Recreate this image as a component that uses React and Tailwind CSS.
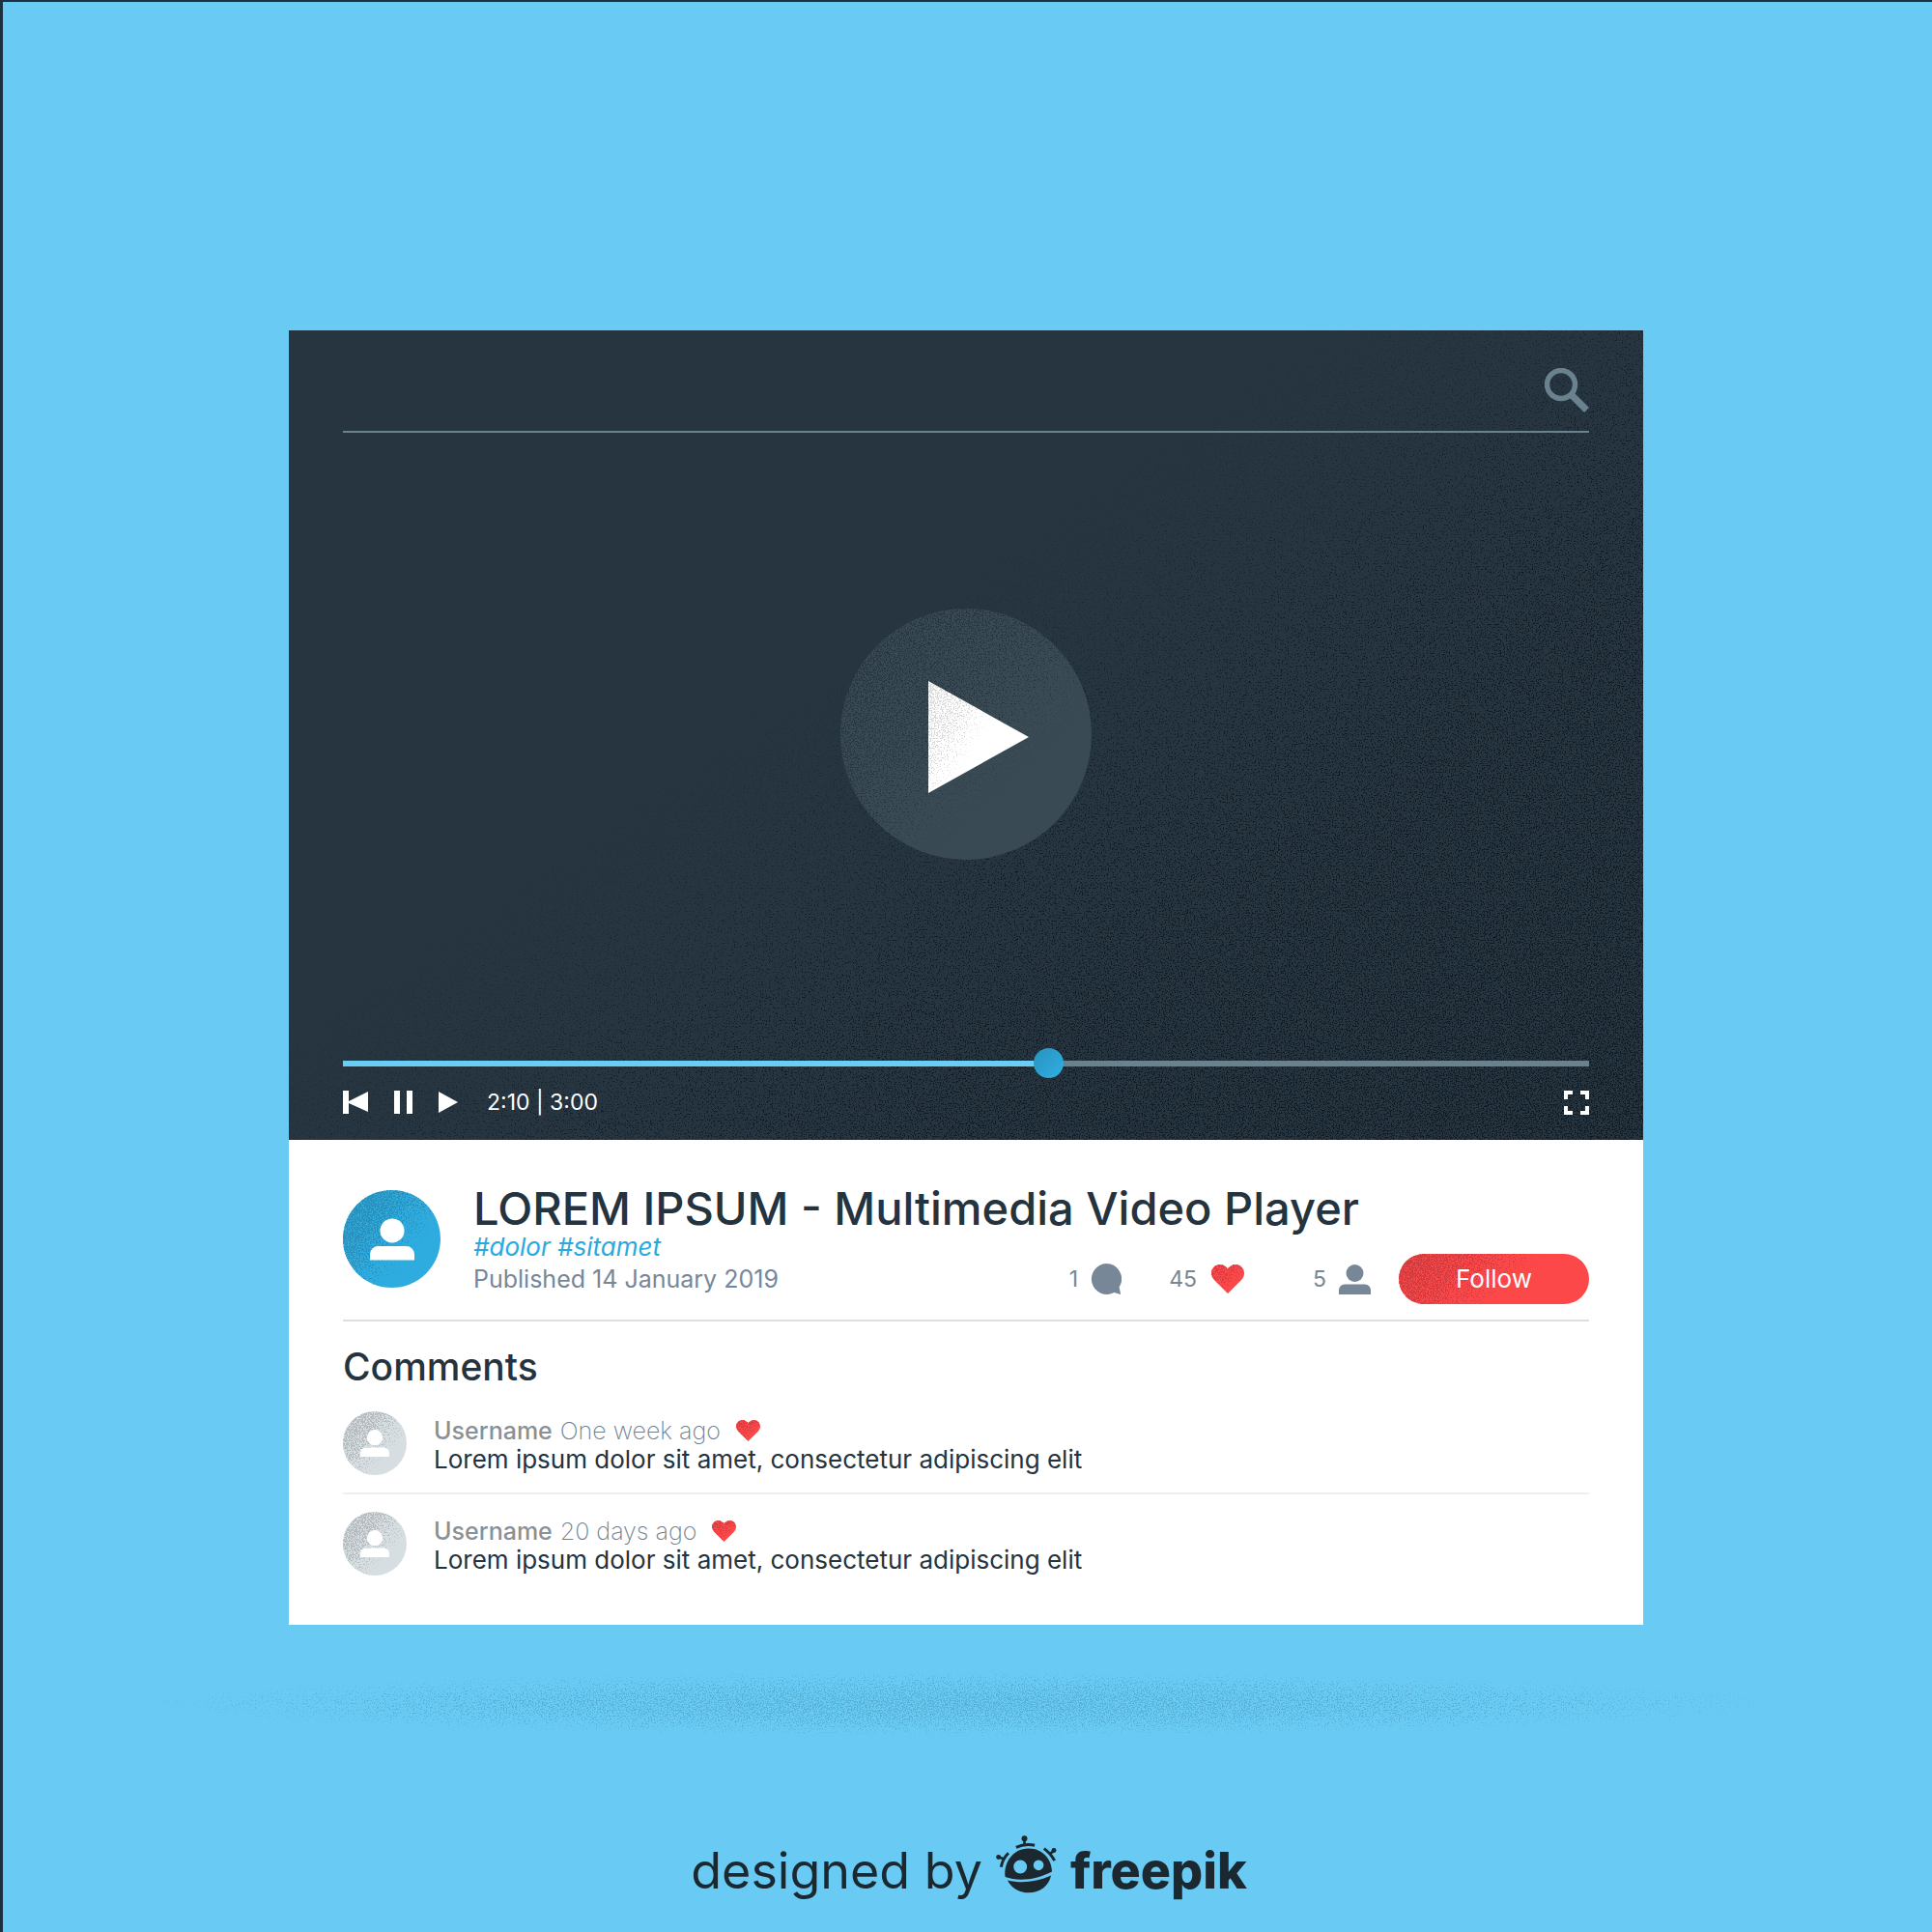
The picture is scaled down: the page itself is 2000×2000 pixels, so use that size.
import React, { useId, useState } from "react";

/* Linear or radial fade plus the speckle filter that turns it into a stipple of one colour. */
function GrainDefs({ id, color, from = [0, 0], to = [0.7, 0.7], strength = 0.8, frequency = 0.7, radial = false }) {
  const stops = (
    <>
      <stop offset="0" stopOpacity={strength} />
      <stop offset="0.5" stopOpacity={strength * 0.72} />
      <stop offset="1" stopOpacity="0" />
    </>
  );
  return (
    <defs>
      {radial ? (
        <radialGradient id={`${id}-fade`}>{stops}</radialGradient>
      ) : (
        <linearGradient id={`${id}-fade`} x1={from[0]} y1={from[1]} x2={to[0]} y2={to[1]}>
          {stops}
        </linearGradient>
      )}
      <filter id={`${id}-speckle`} x="0" y="0" width="1" height="1" colorInterpolationFilters="sRGB">
        <feTurbulence type="fractalNoise" baseFrequency={frequency} numOctaves="2" seed="7" />
        <feColorMatrix values="0 0 0 0 0  0 0 0 0 0  0 0 0 0 0  0 0 0 2.6 -0.8" result="noise" />
        <feComposite in="SourceGraphic" in2="noise" operator="arithmetic" k1="0" k2="1" k3="1" k4="-1" />
        <feComponentTransfer result="dots">
          <feFuncA type="linear" slope="4" />
        </feComponentTransfer>
        <feFlood floodColor={color} />
        <feComposite in2="dots" operator="in" />
      </filter>
    </defs>
  );
}

function Grain(props) {
  const id = useId();
  return (
    <svg className="pointer-events-none absolute inset-0 size-full" aria-hidden="true">
      <GrainDefs id={id} {...props} />
      <rect width="100%" height="100%" fill={`url(#${id}-fade)`} filter={`url(#${id}-speckle)`} />
    </svg>
  );
}

function PersonIcon({ className }) {
  return (
    <svg viewBox="0 0 33 31" fill="currentColor" className={className} aria-hidden="true">
      <circle cx="16.5" cy="9" r="9" />
      <path d="M0 31v-4.500a6 6 0 0 1 6-6h21a6 6 0 0 1 6 6V31z" />
    </svg>
  );
}

function HeartIcon({ className }) {
  const id = useId();
  const d = "M17 30L3.2 16.2C1 13.8 0 11.600 0 9 0 4 3.800 0 8.800 0 12.400 0 15.500 1.800 17 4.600 18.500 1.800 21.600 0 25.200 0 30.200 0 34 4 34 9c0 2.600-1 4.800-3.200 7.200z";
  return (
    <svg viewBox="0 0 34 30" className={className} aria-hidden="true">
      <GrainDefs id={id} color="#d13c40" strength={0.7} to={[0.8, 0.8]} />
      <path d={d} fill="#fc4848" />
      <path d={d} fill={`url(#${id}-fade)`} filter={`url(#${id}-speckle)`} />
    </svg>
  );
}

function BubbleIcon({ className }) {
  return (
    <svg viewBox="0 0 32 32" fill="currentColor" className={className} aria-hidden="true">
      <path d="M16 0a16 16 0 0 1 13.600 24.500L31.200 32l-6.800-1.900A16 16 0 1 1 16 0z" />
    </svg>
  );
}

function Robot({ className }) {
  return (
    <svg viewBox="98 25 190 181" className={className} fill="currentColor" stroke="none" aria-hidden="true">
      <path
        fillRule="evenodd"
        d="M127 155C121 112 150 66 200 66c44 0 72 34 73 72-28 14-62 25-97 25-18 0-35-3-49-8zM174 102a21 21 0 1 0 0 42 21 21 0 0 0 0-42zM231 102a16 16 0 1 0 0 32 16 16 0 0 0 0-32z"
      />
      <path d="M134 165c44 11 92 5 136-15-6 32-35 54-69 54-30 0-54-14-67-39z" />
      <circle cx="187" cy="35" r="9" />
      <circle cx="106" cy="93" r="7.500" />
      <circle cx="279" cy="72" r="7.500" />
      <g fill="none" stroke="currentColor" strokeWidth="8">
        <path d="M187 38v18" />
        <path d="M161 62c18-8 38-10 58-6" strokeWidth="9" />
        <path d="M107 93l17 6" />
        <path d="M114 124c3-18 11-32 23-44" strokeWidth="9" />
        <path d="M279 73l-14 11" />
        <path d="M248 66c14 10 25 22 33 38" strokeWidth="9" />
      </g>
    </svg>
  );
}

function PlayBadge() {
  const disc = useId();
  const tri = useId();
  return (
    <svg viewBox="0 0 260 260" className="size-[260px]" aria-hidden="true">
      <GrainDefs id={disc} color="#273640" strength={0.6} from={[0.1, 0.1]} to={[0.68, 0.72]} />
      <GrainDefs id={tri} color="#d8d8d8" strength={0.62} from={[0, 0.1]} to={[0.55, 0.5]} />
      <circle cx="130" cy="130" r="130" fill="#394a55" />
      <circle cx="130" cy="130" r="130" fill={`url(#${disc}-fade)`} filter={`url(#${disc}-speckle)`} />
      <path d="M91 75L195 133L91 191z" fill="#fff" />
      <path d="M91 75L195 133L91 191z" fill={`url(#${tri}-fade)`} filter={`url(#${tri}-speckle)`} />
    </svg>
  );
}

function SearchBar() {
  return (
    <form role="search" className="flex h-[106px] items-center border-b-2 border-[#6a818e] pt-5" onSubmit={(e) => e.preventDefault()}>
      <input type="text" aria-label="Search" className="h-12 min-w-0 flex-1 bg-transparent text-[26px] text-white outline-none" />
      <button type="submit" aria-label="Submit search" className="text-[#6a818e]">
        <svg viewBox="0 0 46 46" className="size-[46px]" fill="none" stroke="currentColor" aria-hidden="true">
          <circle cx="17" cy="17" r="14.500" strokeWidth="5.500" />
          <path d="M28.500 28.500L43.500 43.500" strokeWidth="7" />
        </svg>
      </button>
    </form>
  );
}

function Controls() {
  const [position, setPosition] = useState(568);
  return (
    <div className="pb-[19px]">
      <input
        type="range"
        aria-label="Seek"
        min="0"
        max="1000"
        value={position}
        onChange={(e) => setPosition(Number(e.target.value))}
        style={{ "--played": `${position / 10}%` }}
        className="block h-[31px] w-full cursor-pointer appearance-none bg-[linear-gradient(to_right,#69cdf4_var(--played),#6a818e_var(--played))] bg-[length:100%_6px] bg-center bg-no-repeat outline-none [&::-webkit-slider-thumb]:size-[31px] [&::-webkit-slider-thumb]:appearance-none [&::-webkit-slider-thumb]:rounded-full [&::-webkit-slider-thumb]:bg-linear-to-br [&::-webkit-slider-thumb]:from-[#2892be] [&::-webkit-slider-thumb]:to-[#2fb0e4]"
      />
      <div className="mt-[5px] flex h-10 items-center text-white">
        <button type="button" aria-label="Previous">
          <svg viewBox="0 0 26 24" className="h-6 w-[26px]" fill="currentColor" aria-hidden="true">
            <path d="M0 0h6v11L26 1v21L6 13v11H0z" />
          </svg>
        </button>
        <button type="button" aria-label="Pause" className="ml-[27px]">
          <svg viewBox="0 0 19 24" className="h-6 w-[19px]" fill="currentColor" aria-hidden="true">
            <path d="M0 0h6v24H0zM13 0h6v24h-6z" />
          </svg>
        </button>
        <button type="button" aria-label="Play" className="ml-[27px]">
          <svg viewBox="0 0 20 24" className="h-6 w-5" fill="currentColor" aria-hidden="true">
            <path d="M0 1l20 11L0 23z" />
          </svg>
        </button>
        <span className="ml-[30px] text-[23px] leading-8">2:10 | 3:00</span>
        <button type="button" aria-label="Full screen" className="ml-auto">
          <svg viewBox="0 0 26 25" className="h-[25px] w-[26px]" fill="none" stroke="currentColor" strokeWidth="4" aria-hidden="true">
            <path d="M2 9V2h7M17 2h7v7M24 16v7h-7M9 23H2v-7" />
          </svg>
        </button>
      </div>
    </div>
  );
}

function Comment({ when, divided }) {
  return (
    <li className={divided ? "flex items-center gap-[28px] border-b-2 border-[#eceeef] pb-[18px]" : "flex items-center gap-[28px] pt-[18px]"}>
      <div className="relative flex size-[66px] shrink-0 items-center justify-center overflow-hidden rounded-full bg-[#d7dee2]">
        <Grain color="#b4babe" strength={0.9} to={[0.75, 0.65]} />
        <PersonIcon className="relative h-[28px] w-[30px] text-white" />
      </div>
      <div className="pt-[3px] leading-[30px]">
        <div className="flex items-center text-[25px]">
          <span className="font-medium text-[#899197]">Username</span>
          <time className="ml-2 font-extralight text-[#6f7f90]">{when}</time>
          <HeartIcon className="ml-4 h-[22px] w-[25px]" />
        </div>
        <p className="text-[26px] text-[#25333e]">Lorem ipsum dolor sit amet, consectetur adipiscing elit</p>
      </div>
    </li>
  );
}

export default function App() {
  return (
    <div className="flex min-h-screen flex-col items-center bg-[#69cbf3] pt-[342px] font-['Inter',sans-serif] shadow-[inset_3px_2px_0_#1b3140]">
      <main className="w-full max-w-[1402px] bg-white">
        <section aria-label="Video" className="relative flex aspect-[1402/838] w-full flex-col bg-[#263540] px-14">
          <Grain color="#111b23" from={[1.05, 0.95]} to={[0.4, 0.38]} strength={0.53} />
          <div className="relative flex flex-1 flex-col">
            <SearchBar />
            <div className="flex flex-1 items-center justify-center pb-[13px]">
              <button type="button" aria-label="Play video" className="rounded-full">
                <PlayBadge />
              </button>
            </div>
            <Controls />
          </div>
        </section>

        <section className="px-14 pb-[51px]">
          <header className="flex items-start gap-[34px] border-b-2 border-[#dae0e4] pt-[47px] pb-[26px]">
            <div className="relative mt-[5px] flex size-[101px] shrink-0 items-center justify-center overflow-hidden rounded-full bg-[#2facdf]">
              <Grain color="#2990bb" strength={0.95} to={[0.75, 0.65]} />
              <PersonIcon className="relative h-[44px] w-[46px] text-white" />
            </div>
            <div className="min-w-0 flex-1">
              <h1 className="text-[47px] leading-[47px] font-medium text-[#25333e]">LOREM IPSUM - Multimedia Video Player</h1>
              <p className="text-[26px] leading-[34px] text-[#2ba9dd] italic">
                <a href="#dolor">#dolor</a> <a href="#sitamet">#sitamet</a>
              </p>
              <div className="flex h-8 items-center text-[25px] leading-8 text-[#778797]">
                <p>Published 14 January 2019</p>
                <ul className="ml-auto flex items-center text-[23px]">
                  <li className="mr-[49px] flex items-center gap-[13px]">
                    1 <BubbleIcon className="size-8" />
                  </li>
                  <li className="mr-[71px] flex items-center gap-[15px]">
                    45 <HeartIcon className="h-[30px] w-[34px]" />
                  </li>
                  <li className="mr-[29px] flex items-center gap-[13px]">
                    5 <PersonIcon className="h-[31px] w-[33px]" />
                  </li>
                </ul>
                <button type="button" className="relative -my-[10px] h-[52px] w-[197px] overflow-hidden rounded-full bg-[#fc4848] text-[26px] text-white">
                  <Grain color="#cf3b3f" strength={0.85} from={[0, 0.1]} to={[0.7, 0.3]} />
                  <span className="relative">Follow</span>
                </button>
              </div>
            </div>
          </header>

          <h2 className="mt-[27px] mb-[26px] text-[39px] leading-10 font-medium text-[#25333e]">Comments</h2>
          <ul>
            <Comment when="One week ago" divided />
            <Comment when="20 days ago" />
          </ul>
        </section>
      </main>

      <div className="relative mt-[47px] h-[70px] w-full max-w-[1760px]">
        <Grain color="#58b2d8" radial strength={0.64} />
      </div>

      <footer className="mt-[100px] flex items-center pl-[6px] text-[52px] leading-[76px] text-[#1c2830]">
        <span>designed by</span>
        <Robot className="mx-[14px] mb-[14px] h-[60px] w-[63px]" />
        <span className="font-extrabold">freepik</span>
      </footer>
    </div>
  );
}
